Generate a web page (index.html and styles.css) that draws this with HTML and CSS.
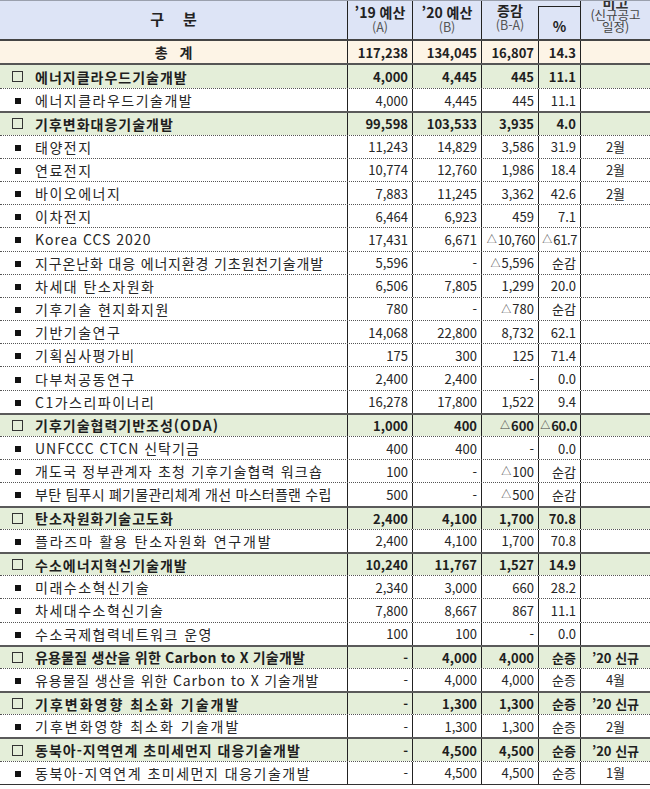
FILE: index.html
```html
<!DOCTYPE html>
<html lang="ko">
<head>
<meta charset="utf-8">
<title>예산표</title>
<link rel="stylesheet" href="styles.css">
</head>
<body>
<div class="sheet">
  <div class="row head">
    <div class="c name hname">구　분</div>
    <div class="c hcell"><span class="ht">’19 예산</span><span class="hs">(A)</span></div>
    <div class="c hcell"><span class="ht">’20 예산</span><span class="hs">(B)</span></div>
    <div class="c hcell up"><span class="ht">증감</span><span class="hs">(B-A)</span></div>
    <div class="c hpct"><div class="pct">%</div></div>
    <div class="c hnote"><span class="nt">비고</span><span class="ns">(신규공고</span><span class="ns">일정)</span></div>
  </div>
  <div class="row total">
    <div class="c name tname">총 계</div>
    <div class="c n">117,238</div>
    <div class="c n">134,045</div>
    <div class="c n">16,807</div>
    <div class="c n">14.3</div>
    <div class="c note"></div>
  </div>

  <div class="row cat first"><div class="c name"><i class="box"></i>에너지클라우드기술개발</div><div class="c n">4,000</div><div class="c n">4,445</div><div class="c n">445</div><div class="c n">11.1</div><div class="c note"></div></div>
  <div class="row"><div class="c name"><i class="dot"></i>에너지클라우드기술개발</div><div class="c n">4,000</div><div class="c n">4,445</div><div class="c n">445</div><div class="c n">11.1</div><div class="c note"></div></div>

  <div class="row cat"><div class="c name"><i class="box"></i>기후변화대응기술개발</div><div class="c n">99,598</div><div class="c n">103,533</div><div class="c n">3,935</div><div class="c n">4.0</div><div class="c note"></div></div>
  <div class="row"><div class="c name"><i class="dot"></i>태양전지</div><div class="c n">11,243</div><div class="c n">14,829</div><div class="c n">3,586</div><div class="c n">31.9</div><div class="c note">2월</div></div>
  <div class="row"><div class="c name"><i class="dot"></i>연료전지</div><div class="c n">10,774</div><div class="c n">12,760</div><div class="c n">1,986</div><div class="c n">18.4</div><div class="c note">2월</div></div>
  <div class="row"><div class="c name"><i class="dot"></i>바이오에너지</div><div class="c n">7,883</div><div class="c n">11,245</div><div class="c n">3,362</div><div class="c n">42.6</div><div class="c note">2월</div></div>
  <div class="row"><div class="c name"><i class="dot"></i>이차전지</div><div class="c n">6,464</div><div class="c n">6,923</div><div class="c n">459</div><div class="c n">7.1</div><div class="c note"></div></div>
  <div class="row"><div class="c name lat"><i class="dot"></i>Korea CCS 2020</div><div class="c n">17,431</div><div class="c n">6,671</div><div class="c n tight"><span class="tri">△</span>10,760</div><div class="c n tight"><span class="tri">△</span>61.7</div><div class="c note"></div></div>
  <div class="row"><div class="c name fit-b"><i class="dot"></i>지구온난화 대응 에너지환경 기초원천기술개발</div><div class="c n">5,596</div><div class="c n">-</div><div class="c n"><span class="tri">△</span>5,596</div><div class="c n">순감</div><div class="c note"></div></div>
  <div class="row"><div class="c name"><i class="dot"></i>차세대 탄소자원화</div><div class="c n">6,506</div><div class="c n">7,805</div><div class="c n">1,299</div><div class="c n">20.0</div><div class="c note"></div></div>
  <div class="row"><div class="c name"><i class="dot"></i>기후기술 현지화지원</div><div class="c n">780</div><div class="c n">-</div><div class="c n"><span class="tri">△</span>780</div><div class="c n">순감</div><div class="c note"></div></div>
  <div class="row"><div class="c name"><i class="dot"></i>기반기술연구</div><div class="c n">14,068</div><div class="c n">22,800</div><div class="c n">8,732</div><div class="c n">62.1</div><div class="c note"></div></div>
  <div class="row"><div class="c name"><i class="dot"></i>기획심사평가비</div><div class="c n">175</div><div class="c n">300</div><div class="c n">125</div><div class="c n">71.4</div><div class="c note"></div></div>
  <div class="row"><div class="c name"><i class="dot"></i>다부처공동연구</div><div class="c n">2,400</div><div class="c n">2,400</div><div class="c n">-</div><div class="c n">0.0</div><div class="c note"></div></div>
  <div class="row"><div class="c name"><i class="dot"></i>C1가스리파이너리</div><div class="c n">16,278</div><div class="c n">17,800</div><div class="c n">1,522</div><div class="c n">9.4</div><div class="c note"></div></div>

  <div class="row cat"><div class="c name"><i class="box"></i>기후기술협력기반조성(ODA)</div><div class="c n">1,000</div><div class="c n">400</div><div class="c n"><span class="tri">△</span>600</div><div class="c n tight"><span class="tri">△</span>60.0</div><div class="c note"></div></div>
  <div class="row"><div class="c name lat"><i class="dot"></i>UNFCCC CTCN 신탁기금</div><div class="c n">400</div><div class="c n">400</div><div class="c n">-</div><div class="c n">0.0</div><div class="c note"></div></div>
  <div class="row"><div class="c name fit-c"><i class="dot"></i>개도국 정부관계자 초청 기후기술협력 워크숍</div><div class="c n">100</div><div class="c n">-</div><div class="c n"><span class="tri">△</span>100</div><div class="c n">순감</div><div class="c note"></div></div>
  <div class="row"><div class="c name fit-a"><i class="dot"></i>부탄 팀푸시 폐기물관리체계 개선 마스터플랜 수립</div><div class="c n">500</div><div class="c n">-</div><div class="c n"><span class="tri">△</span>500</div><div class="c n">순감</div><div class="c note"></div></div>

  <div class="row cat"><div class="c name"><i class="box"></i>탄소자원화기술고도화</div><div class="c n">2,400</div><div class="c n">4,100</div><div class="c n">1,700</div><div class="c n">70.8</div><div class="c note"></div></div>
  <div class="row"><div class="c name fit-e"><i class="dot"></i>플라즈마 활용 탄소자원화 연구개발</div><div class="c n">2,400</div><div class="c n">4,100</div><div class="c n">1,700</div><div class="c n">70.8</div><div class="c note"></div></div>

  <div class="row cat"><div class="c name"><i class="box"></i>수소에너지혁신기술개발</div><div class="c n">10,240</div><div class="c n">11,767</div><div class="c n">1,527</div><div class="c n">14.9</div><div class="c note"></div></div>
  <div class="row"><div class="c name"><i class="dot"></i>미래수소혁신기술</div><div class="c n">2,340</div><div class="c n">3,000</div><div class="c n">660</div><div class="c n">28.2</div><div class="c note"></div></div>
  <div class="row"><div class="c name"><i class="dot"></i>차세대수소혁신기술</div><div class="c n">7,800</div><div class="c n">8,667</div><div class="c n">867</div><div class="c n">11.1</div><div class="c note"></div></div>
  <div class="row"><div class="c name"><i class="dot"></i>수소국제협력네트워크 운영</div><div class="c n">100</div><div class="c n">100</div><div class="c n">-</div><div class="c n">0.0</div><div class="c note"></div></div>

  <div class="row cat"><div class="c name fit-a"><i class="box"></i>유용물질 생산을 위한 Carbon to X 기술개발</div><div class="c n">-</div><div class="c n">4,000</div><div class="c n">4,000</div><div class="c n">순증</div><div class="c note">’20 신규</div></div>
  <div class="row"><div class="c name fit-b"><i class="dot"></i>유용물질 생산을 위한 Carbon to X 기술개발</div><div class="c n">-</div><div class="c n">4,000</div><div class="c n">4,000</div><div class="c n">순증</div><div class="c note">4월</div></div>

  <div class="row cat"><div class="c name fit-w"><i class="box"></i>기후변화영향 최소화 기술개발</div><div class="c n">-</div><div class="c n">1,300</div><div class="c n">1,300</div><div class="c n">순증</div><div class="c note">’20 신규</div></div>
  <div class="row"><div class="c name fit-w"><i class="dot"></i>기후변화영향 최소화 기술개발</div><div class="c n">-</div><div class="c n">1,300</div><div class="c n">1,300</div><div class="c n">순증</div><div class="c note">2월</div></div>

  <div class="row cat"><div class="c name"><i class="box"></i>동북아-지역연계 초미세먼지 대응기술개발</div><div class="c n">-</div><div class="c n">4,500</div><div class="c n">4,500</div><div class="c n">순증</div><div class="c note">’20 신규</div></div>
  <div class="row last"><div class="c name"><i class="dot"></i>동북아-지역연계 초미세먼지 대응기술개발</div><div class="c n">-</div><div class="c n">4,500</div><div class="c n">4,500</div><div class="c n">순증</div><div class="c note">1월</div></div>
</div>
</body>
</html>
```

FILE: styles.css
```css
* { box-sizing: border-box; }
html, body {
  margin: 0;
  padding: 0;
  background: #ffffff;
}
body {
  font-family: "Noto Sans CJK KR", "Noto Sans", sans-serif;
  color: #222;
  width: 650px;
}
.sheet {
  width: 650px;
}
.row {
  display: grid;
  grid-template-columns: 347px 65px 69px 57px 42px 70px;
  height: 23.2px;
  border-top: 1px dotted #555;
}
.c {
  display: flex;
  align-items: center;
  min-width: 0;
  overflow: hidden;
  white-space: nowrap;
  font-size: 14px;
  line-height: 1;
}
.c + .c {
  border-left: 1px solid #222;
}
.name {
  padding-left: 12px;
  font-size: 14px;
  color: #262626;
  letter-spacing: 1.5px;
}
.name.lat { letter-spacing: 1px; }
.name.fit-a { letter-spacing: 0.25px; }
.name.fit-b { letter-spacing: 0.85px; }
.name.fit-c { letter-spacing: 1.2px; }
.name.fit-e { letter-spacing: 1.8px; }
.name.fit-w { letter-spacing: 2px; }
.n {
  justify-content: flex-end;
  padding-right: 4px;
  font-size: 13px;
  color: #262626;
}
.n.tight { letter-spacing: -0.4px; padding-right: 3px; }
.tri {
  font-size: 10px;
  margin-right: 1px;
  letter-spacing: 0;
  color: #444;
}
.note {
  justify-content: center;
  font-size: 13px;
  color: #262626;
}

.box {
  display: inline-block;
  width: 11px;
  height: 11px;
  border: 1px solid #333;
  margin-right: 12px;
  flex: none;
}
.dot {
  display: inline-block;
  width: 6px;
  height: 6px;
  background: #111;
  margin-left: 3px;
  margin-right: 14px;
  margin-top: 2px;
  flex: none;
}

.cat {
  background: #e4eed9;
  border-top: 2px solid #5a5a5a;
}
.cat.first { border-top: none; }
.cat .c { font-weight: 700; color: #1e1e1e; }
.cat .name { letter-spacing: 1px; }
.cat .name.fit-a { letter-spacing: 0.2px; }
.cat .name.fit-w { letter-spacing: 2px; }
.last { height: 24.2px; border-bottom: 1px solid #333; }

/* header */
.head {
  height: 41px;
  background: #dde4f6;
  border-top: 1px solid #9aa0ad;
  border-bottom: 2px solid #444;
}
.hname {
  justify-content: center;
  padding-left: 0;
  font-weight: 700;
  font-size: 15px;
  letter-spacing: 2px;
  text-indent: 2px;
  color: #222;
  padding-bottom: 3px;
}
.hcell {
  flex-direction: column;
  justify-content: center;
  padding-bottom: 3px;
}
.hcell.up { padding-bottom: 7px; }
.ht {
  font-weight: 700;
  font-size: 14px;
  color: #222;
  line-height: 15px;
}
.hs {
  font-size: 12.5px;
  color: #555;
  line-height: 13px;
}
.head .c.hpct {
  border-left: none;
  align-items: stretch;
}
.pct {
  flex: 1;
  margin-top: 5px;
  border-top: 1px solid #222;
  border-left: 1px solid #222;
  display: flex;
  align-items: center;
  justify-content: center;
  font-weight: 700;
  font-size: 14px;
  color: #222;
  padding-top: 5px;
}
.hnote {
  flex-direction: column;
  justify-content: flex-start;
  align-items: center;
  color: #444;
}
.nt {
  font-weight: 700;
  font-size: 14px;
  line-height: 14px;
  margin-top: -6px;
  color: #333;
}
.ns {
  font-size: 12.5px;
  line-height: 12px;
  color: #444;
}

/* total */
.total {
  height: 24px;
  background: #fdf4e6;
  border-top: none;
  border-bottom: 2px solid #555;
}
.total .c { font-weight: 700; color: #222; }
.tname {
  justify-content: center;
  padding-left: 0;
  letter-spacing: 4px;
  text-indent: 4px;
}
```
